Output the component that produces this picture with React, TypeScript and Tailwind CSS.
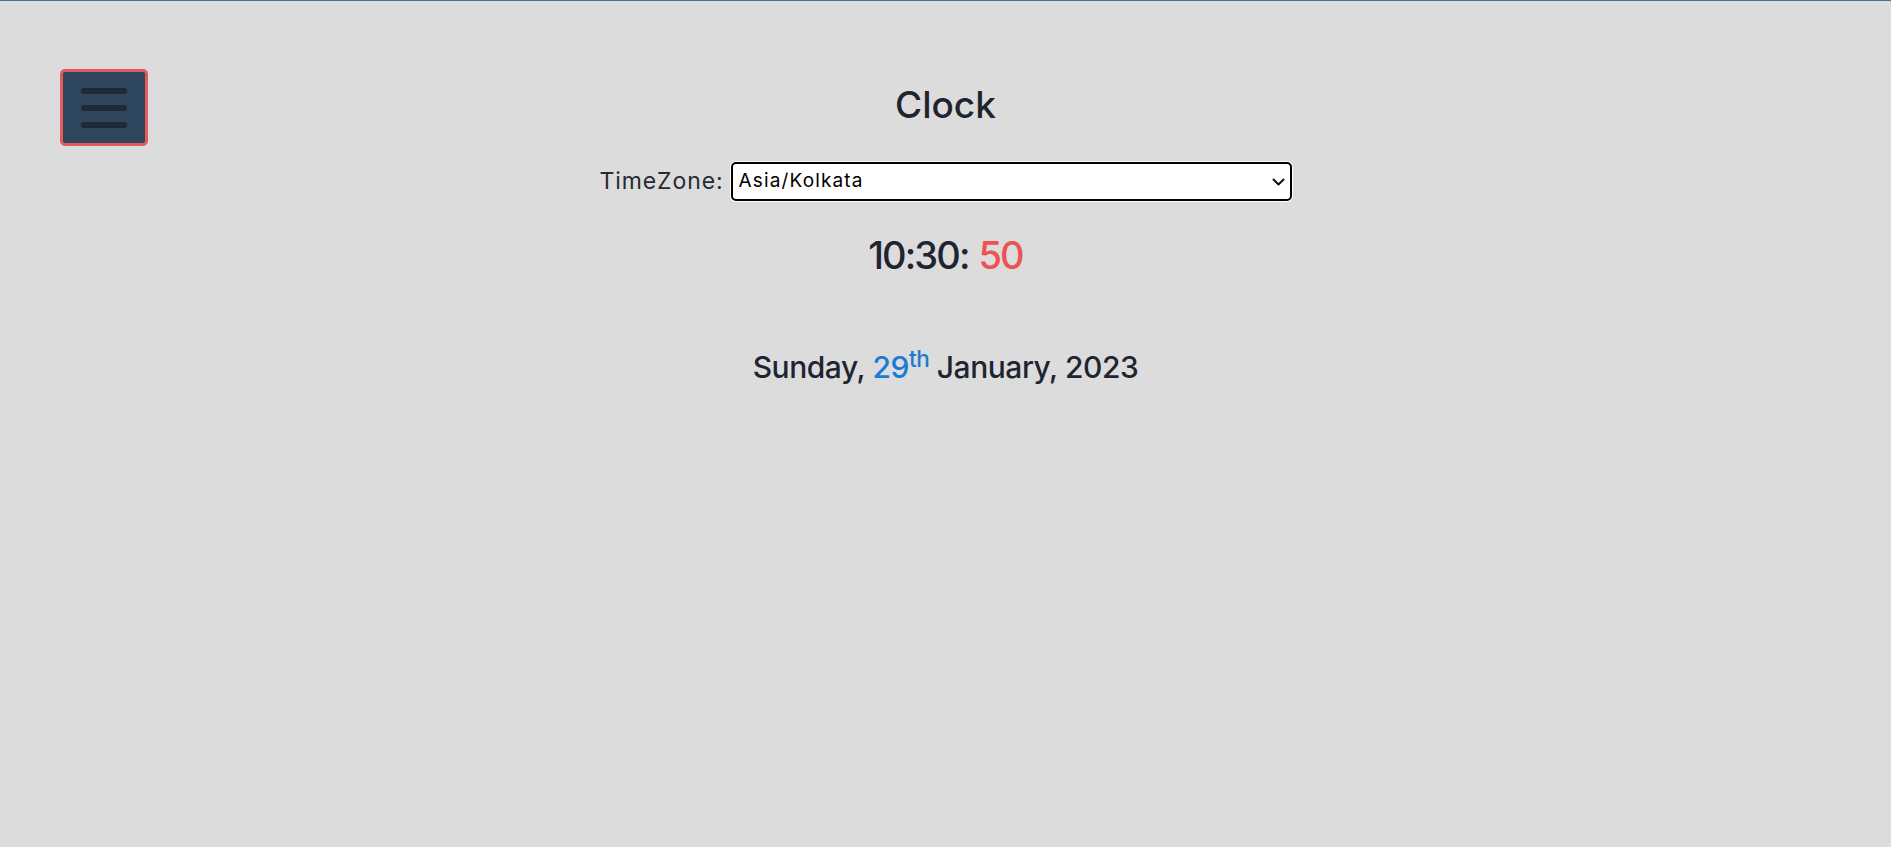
import { useState } from "react";

const ZONES = ["Asia/Kolkata", "Asia/Tokyo", "Europe/London", "America/New_York", "Australia/Sydney"];

function MenuButton() {
  return (
    <button className="absolute left-[60px] top-[68px] flex h-[77px] w-[88px] flex-col items-center justify-center gap-[11px] rounded-[5px] border-[3px] border-[#e35a5c] bg-[#2e465e]">
      <span className="h-[6px] w-[46px] rounded-full bg-[#1f2a37]" />
      <span className="h-[6px] w-[46px] rounded-full bg-[#1f2a37]" />
      <span className="h-[6px] w-[46px] rounded-full bg-[#1f2a37]" />
    </button>
  );
}

export default function App() {
  const [zone, setZone] = useState("Asia/Kolkata");

  return (
    <div className="relative min-h-[847px] border-t border-[#4c6f9a] bg-[#dcdcdc] font-['Inter','Noto_Sans',sans-serif] text-[#1f2530]">
      <MenuButton />

      <div className="flex flex-col items-center pt-[85px]">
        <h1 className="text-[37px] font-medium leading-none">Clock</h1>

        <div className="mt-[39px] flex items-center gap-[7px]">
          <label className="text-[23px] leading-none tracking-[0.04em] text-[#262b33]">TimeZone:</label>
          <div className="relative">
            <select
              value={zone}
              onChange={(e) => setZone(e.target.value)}
              className="h-[39px] w-[561px] appearance-none rounded-[5px] border-2 border-black bg-white pl-[6px] text-[19px] tracking-[0.06em] text-black outline-none ring-1 ring-white"
            >
              {ZONES.map((z) => (
                <option key={z}>{z}</option>
              ))}
            </select>
            <svg className="pointer-events-none absolute right-[7px] top-[16px]" width="13" height="8" viewBox="0 0 13 8" fill="none">
              <path d="M1.5 1.5l5 5 5-5" stroke="#111" strokeWidth="2" strokeLinecap="round" strokeLinejoin="round" />
            </svg>
          </div>
        </div>

        <p className="mt-[35px] text-[38px] font-medium leading-none tracking-[-0.05em]">
          10:30:<span className="ml-[10px] text-[#ec5355]">50</span>
        </p>

        <p className="mt-[78px] text-[30px] font-medium leading-none tracking-[-0.015em]">
          Sunday, <span className="text-[#1a7bd6]">29<sup>th</sup></span> January, 2023
        </p>
      </div>
    </div>
  );
}
